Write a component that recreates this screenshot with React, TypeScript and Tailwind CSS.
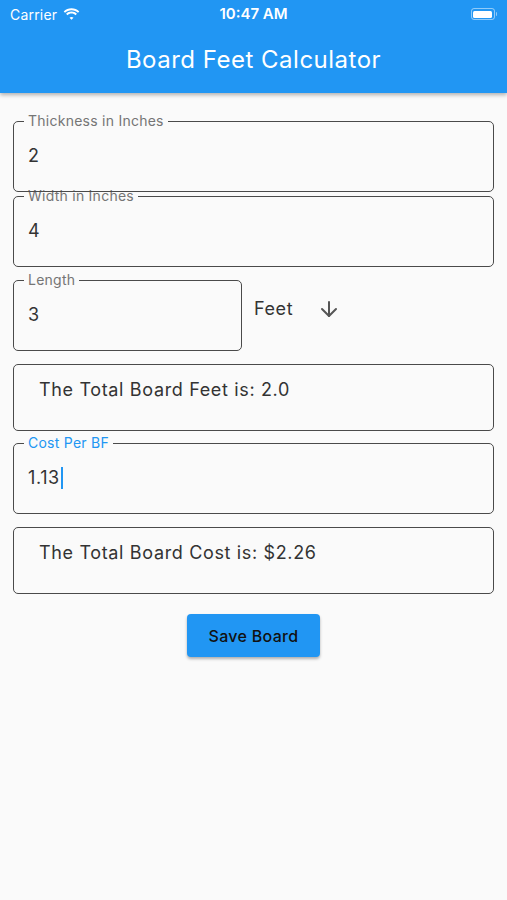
import { ArrowDown } from 'lucide-react';

function Field({ label, value, focused, className = '' }: { label: string; value: string; focused?: boolean; className?: string }) {
  return (
    <div className={`relative h-[71px] rounded-[5px] border-[1.5px] border-[#4a4a4a] ${className}`}>
      <span
        className={`absolute -top-[9px] left-[10px] bg-[#fafafa] px-[4px] text-[14px] leading-[16px] tracking-[0.25px] ${
          focused ? 'text-[#2196f3]' : 'text-[#757575]'
        }`}
      >
        {label}
      </span>
      <div className="flex h-full items-center pb-[2px] pl-[14px] text-[18px] tracking-[0.6px] text-[#333]">
        {value}
        {focused && <span className="ml-[1px] inline-block h-[22px] w-[2px] bg-[#2196f3]" />}
      </div>
    </div>
  );
}

function ResultBox({ text, className = '' }: { text: string; className?: string }) {
  return (
    <div className={`h-[67px] rounded-[5px] border-[1.5px] border-[#4a4a4a] pl-[25px] pt-[11px] text-[18px] tracking-[0.65px] text-[#333] ${className}`}>
      {text}
    </div>
  );
}

export default function App() {
  return (
    <div className="min-h-[900px] bg-[#fafafa]" style={{ fontFamily: 'Inter, "Noto Sans", sans-serif' }}>
      {/* App bar + status bar */}
      <div className="relative z-20 h-[93px] bg-[#2196f3] text-white shadow-[0_2px_4px_rgba(0,0,0,0.3)]">
        <div className="relative flex h-[28px] items-center px-[10px]">
          <span className="text-[14px] tracking-[0.2px]">Carrier</span>
          <svg className="ml-[6px]" width="17" height="12" viewBox="0 0 17 12" fill="white">
            <path d="M8.5 2.2c2.5 0 4.8 1 6.5 2.6l1.3-1.4C14.2 1.3 11.5 0.2 8.5 0.2S2.8 1.3 0.7 3.4L2 4.8C3.7 3.2 6 2.2 8.5 2.2z" />
            <path d="M8.5 5.6c1.6 0 3 0.6 4.1 1.6l1.3-1.4C12.5 4.4 10.6 3.6 8.5 3.6S4.5 4.4 3.1 5.8l1.3 1.4C5.5 6.2 6.9 5.6 8.5 5.6z" />
            <path d="M8.5 8.9c0.8 0 1.5 0.3 2 0.8L8.5 11.8 6.5 9.7c0.5-0.5 1.2-0.8 2-0.8z" />
          </svg>
          <span className="absolute left-1/2 -translate-x-1/2 text-[15px] font-semibold">10:47 AM</span>
          <div className="ml-auto flex items-center">
            <div className="h-[12px] w-[24px] rounded-[3px] border border-white/50 p-[1.5px]">
              <div className="h-full w-full rounded-[1.5px] bg-white" />
            </div>
            <div className="ml-[1px] h-[4px] w-[1.5px] rounded-r bg-white/50" />
          </div>
        </div>
        <div className="flex h-[65px] items-center justify-center pb-[2px] text-[24px] tracking-[0.5px]">Board Feet Calculator</div>
      </div>

      <div className="flex flex-col px-[13px] pt-[28px]">
        <Field label="Thickness in Inches" value="2" className="z-10" />
        <Field label="Width in Inches" value="4" className="mt-[4px]" />
        <div className="mt-[13px] flex items-center">
          <Field label="Length" value="3" className="w-[229px]" />
          <span className="ml-[12px] pb-[14px] text-[18px] tracking-[0.6px] text-[#333]">Feet</span>
          <ArrowDown className="ml-[24px] mb-[14px] text-[#555]" size={24} strokeWidth={2} />
        </div>
        <ResultBox text="The Total Board Feet is: 2.0" className="mt-[13px]" />
        <Field label="Cost Per BF" value="1.13" focused className="mt-[12px]" />
        <ResultBox text="The Total Board Cost is: $2.26" className="mt-[13px]" />
        <div className="mt-[20px] flex justify-center">
          <button className="h-[43px] w-[133px] rounded-[4px] bg-[#2196f3] text-[16px] font-medium tracking-[0.3px] text-[#111] shadow-[0_2px_3px_rgba(0,0,0,0.3)]">
            Save Board
          </button>
        </div>
      </div>
    </div>
  );
}
